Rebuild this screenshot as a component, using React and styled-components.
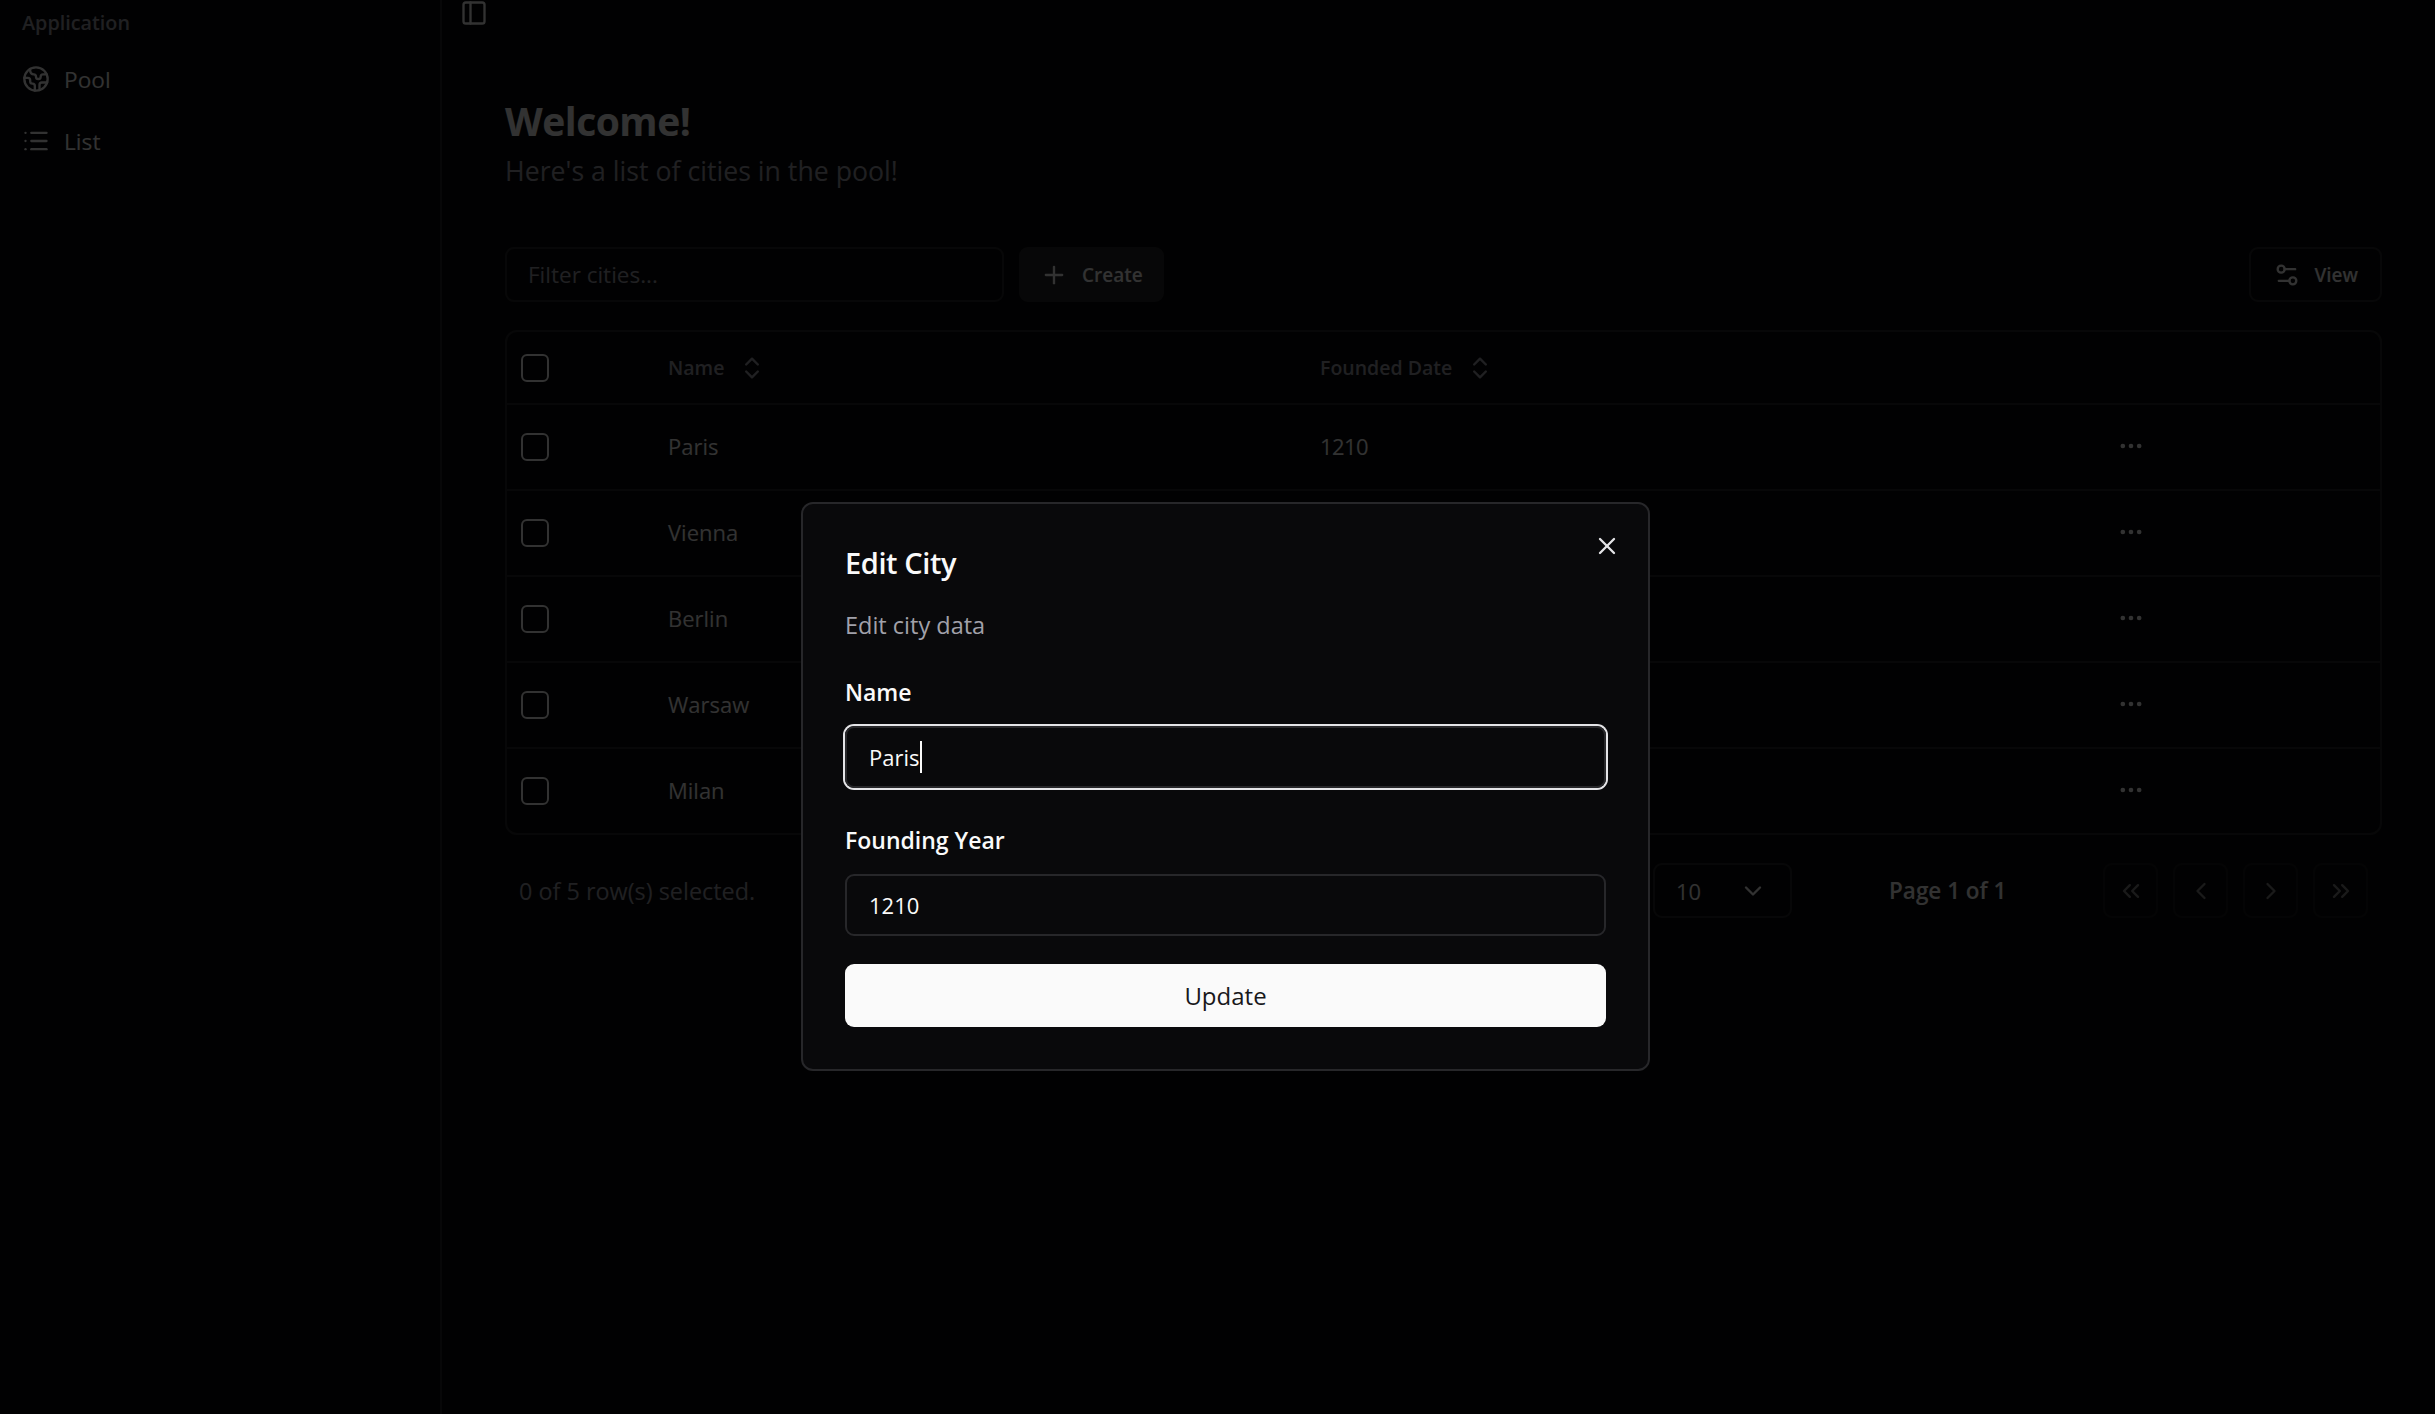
import React from 'react'
import styled, { createGlobalStyle } from 'styled-components'
import {
  PanelLeft, Earth, List, Plus, Settings2, ChevronsUpDown, Ellipsis, ChevronDown,
  ChevronsLeft, ChevronLeft, ChevronRight, ChevronsRight, X,
} from 'lucide-react'

const GlobalStyle = createGlobalStyle`
  html, body { margin: 0; height: 100%; background: #09090b; overflow: hidden; }
  body { font-family: "Open Sans", "Noto Sans", sans-serif; color: #fafafa; }
  * { box-sizing: border-box; }
`

const Shell = styled.div`
  display: flex;
  height: 100vh;
`

const Sidebar = styled.aside`
  width: 442px;
  flex: none;
  padding: 11px 22px 0;
  border-right: 2px solid #27272a;
`

const GroupLabel = styled.div`
  font-size: 19.8px;
  font-weight: 600;
  line-height: 24px;
  color: #a1a1aa;
  margin-bottom: 13px;
`

const MenuItem = styled.div`
  display: flex;
  align-items: center;
  gap: 14px;
  height: 62px;
  font-size: 22.7px;
  color: #fafafa;
`

const Main = styled.main`
  flex: 1;
  min-width: 0;
  display: flex;
  flex-direction: column;
`

const Trigger = styled.div`
  height: 26px;
  margin: -1px 0 0 18px;
  color: #fafafa;
  line-height: 0;
`

const Content = styled.div`
  padding: 74px 53px 0 63px;
`

const Title = styled.h1`
  margin: 0;
  font-size: 39px;
  font-weight: 700;
  line-height: 44px;
  letter-spacing: -0.5px;
`

const Subtitle = styled.p`
  margin: 12px 0 60px;
  font-size: 26.7px;
  line-height: 32px;
  color: #a1a1aa;
`

const Toolbar = styled.div`
  display: flex;
  align-items: center;
  gap: 15px;
  margin-bottom: 28px;
`

const FilterInput = styled.div`
  width: 499px;
  height: 55px;
  display: flex;
  align-items: center;
  padding: 0 21px;
  border: 2px solid #27272a;
  border-radius: 9px;
  font-size: 22.5px;
  color: #a1a1aa;
`

const ToolButton = styled.div`
  height: 55px;
  display: flex;
  align-items: center;
  gap: ${(p) => p.$gap}px;
  padding: 0 ${(p) => (p.$filled ? 19 : 22)}px;
  border: 2px solid #27272a;
  border-radius: 9px;
  background: ${(p) => (p.$filled ? '#27272a' : 'transparent')};
  margin-left: ${(p) => (p.$push ? 'auto' : 0)};
  font-size: 19px;
  font-weight: 600;
  color: #fafafa;
`

const TableFrame = styled.div`
  border: 2px solid #27272a;
  border-radius: 12px;
`

const Row = styled.div`
  display: grid;
  grid-template-columns: 146px 652px 787px 1fr;
  align-items: center;
  height: ${(p) => (p.$head ? 71 : 86)}px;
  border-top: ${(p) => (p.$head ? 'none' : '2px solid #27272a')};
`

const Cell = styled.div`
  padding: 0 0 ${(p) => (p.$lift ? 2 : 0)}px 15px;
  display: flex;
  align-items: center;
  gap: 14px;
  font-size: ${(p) => (p.$head ? 19.5 : 22)}px;
  font-weight: ${(p) => (p.$head ? 600 : p.$year ? 500 : 400)};
  letter-spacing: ${(p) => (p.$year ? -0.6 : 0)}px;
  color: ${(p) => (p.$head ? '#a1a1aa' : '#fafafa')};
`

const Checkbox = styled.span`
  width: 28px;
  height: 28px;
  margin-left: -1px;
  border: 2px solid #fafafa;
  border-radius: 6px;
`

const RowAction = styled.div`
  width: 48px;
  height: 48px;
  display: flex;
  align-items: center;
  justify-content: center;
  color: #fafafa;
`

const Footer = styled.div`
  display: flex;
  align-items: center;
  justify-content: space-between;
  padding: 0 14px;
  margin-top: 28px;
`

const Selected = styled.div`
  font-size: 23.4px;
  color: #a1a1aa;
`

const Pagination = styled.div`
  display: flex;
  align-items: center;
`

const RowsLabel = styled.span`
  font-size: 21px;
  font-weight: 600;
  margin-right: 23px;
`

const PageSelect = styled.div`
  width: 139px;
  height: 55px;
  display: flex;
  align-items: center;
  justify-content: space-between;
  padding: 0 23px 0 21px;
  border: 2px solid #27272a;
  border-radius: 9px;
  font-size: 22px;
  margin-right: 97px;
`

const PageLabel = styled.span`
  font-size: 22.5px;
  font-weight: 600;
  width: 116px;
  white-space: nowrap;
  margin-right: 98px;
`

const PageButtons = styled.div`
  display: flex;
  gap: 15px;
`

const PageButton = styled.div`
  width: 55px;
  height: 55px;
  display: flex;
  align-items: center;
  justify-content: center;
  border: 2px solid #27272a;
  border-radius: 9px;
  opacity: 0.5;
`

const Overlay = styled.div`
  position: fixed;
  inset: 0;
  background: rgba(0, 0, 0, 0.8);
`

const Dialog = styled.div`
  position: fixed;
  left: 801px;
  top: 502px;
  width: 849px;
  padding: 41px 42px 42px;
  background: #09090b;
  border: 2px solid #27272a;
  border-radius: 12px;
`

const CloseButton = styled.div`
  position: absolute;
  right: 27px;
  top: 28px;
  line-height: 0;
  color: #e4e4e7;
`

const DialogTitle = styled.h2`
  margin: 0;
  font-size: 29px;
  font-weight: 600;
  line-height: 36px;
  letter-spacing: -0.4px;
`

const DialogText = styled.p`
  margin: 28px 0 35px;
  font-size: 23.5px;
  line-height: 32px;
  color: #a1a1aa;
`

const FieldLabel = styled.label`
  display: block;
  font-size: 23px;
  font-weight: 600;
  line-height: 32px;
  margin-bottom: 18px;
`

const FieldBox = styled.div`
  height: 62px;
  display: flex;
  align-items: center;
  padding: 0 22px;
  border: 2px solid #27272a;
  border-radius: 9px;
  font-size: 22px;
  margin-bottom: ${(p) => (p.$last ? 28 : 36)}px;
  box-shadow: ${(p) => (p.$focused ? '0 0 0 2px #e4e4e7' : 'none')};
`

const Caret = styled.span`
  width: 2px;
  height: 32px;
  background: #fafafa;
`

const SubmitButton = styled.div`
  height: 63px;
  display: flex;
  align-items: center;
  justify-content: center;
  background: #fafafa;
  border-radius: 9px;
  color: #18181b;
  font-size: 24px;
  font-weight: 500;
`

const cities = [
  { name: 'Paris', year: 1210 },
  { name: 'Vienna', year: 1365 },
  { name: 'Berlin', year: 1237 },
  { name: 'Warsaw', year: 1300 },
  { name: 'Milan', year: 1158 },
]

const App = () => {
  return (
    <>
      <GlobalStyle />
      <Shell>
        <Sidebar>
          <GroupLabel>Application</GroupLabel>
          <MenuItem><Earth size={28} />Pool</MenuItem>
          <MenuItem><List size={28} />List</MenuItem>
        </Sidebar>
        <Main>
          <Trigger><PanelLeft size={28} /></Trigger>
          <Content>
            <Title>Welcome!</Title>
            <Subtitle>Here's a list of cities in the pool!</Subtitle>
            <Toolbar>
              <FilterInput>Filter cities...</FilterInput>
              <ToolButton $filled $gap={14}><Plus size={28} />Create</ToolButton>
              <ToolButton $push $gap={13}><Settings2 size={28} />View</ToolButton>
            </Toolbar>
            <TableFrame>
              <Row $head>
                <Cell><Checkbox /></Cell>
                <Cell $head>Name <ChevronsUpDown size={28} /></Cell>
                <Cell $head>Founded Date <ChevronsUpDown size={28} /></Cell>
                <Cell />
              </Row>
              {cities.map((city) => (
                <Row key={city.name}>
                  <Cell><Checkbox /></Cell>
                  <Cell $lift>{city.name}</Cell>
                  <Cell $lift $year>{city.year}</Cell>
                  <Cell $lift><RowAction><Ellipsis size={28} /></RowAction></Cell>
                </Row>
              ))}
            </TableFrame>
            <Footer>
              <Selected>0 of 5 row(s) selected.</Selected>
              <Pagination>
                <RowsLabel>Rows per page</RowsLabel>
                <PageSelect>10 <ChevronDown size={28} /></PageSelect>
                <PageLabel>Page 1 of 1</PageLabel>
                <PageButtons>
                  <PageButton><ChevronsLeft size={28} /></PageButton>
                  <PageButton><ChevronLeft size={28} /></PageButton>
                  <PageButton><ChevronRight size={28} /></PageButton>
                  <PageButton><ChevronsRight size={28} /></PageButton>
                </PageButtons>
              </Pagination>
            </Footer>
          </Content>
        </Main>
      </Shell>
      <Overlay />
      <Dialog>
        <CloseButton><X size={28} /></CloseButton>
        <DialogTitle>Edit City</DialogTitle>
        <DialogText>Edit city data</DialogText>
        <FieldLabel>Name</FieldLabel>
        <FieldBox $focused>Paris<Caret /></FieldBox>
        <FieldLabel>Founding Year</FieldLabel>
        <FieldBox $last>1210</FieldBox>
        <SubmitButton>Update</SubmitButton>
      </Dialog>
    </>
  )
}

export default App
